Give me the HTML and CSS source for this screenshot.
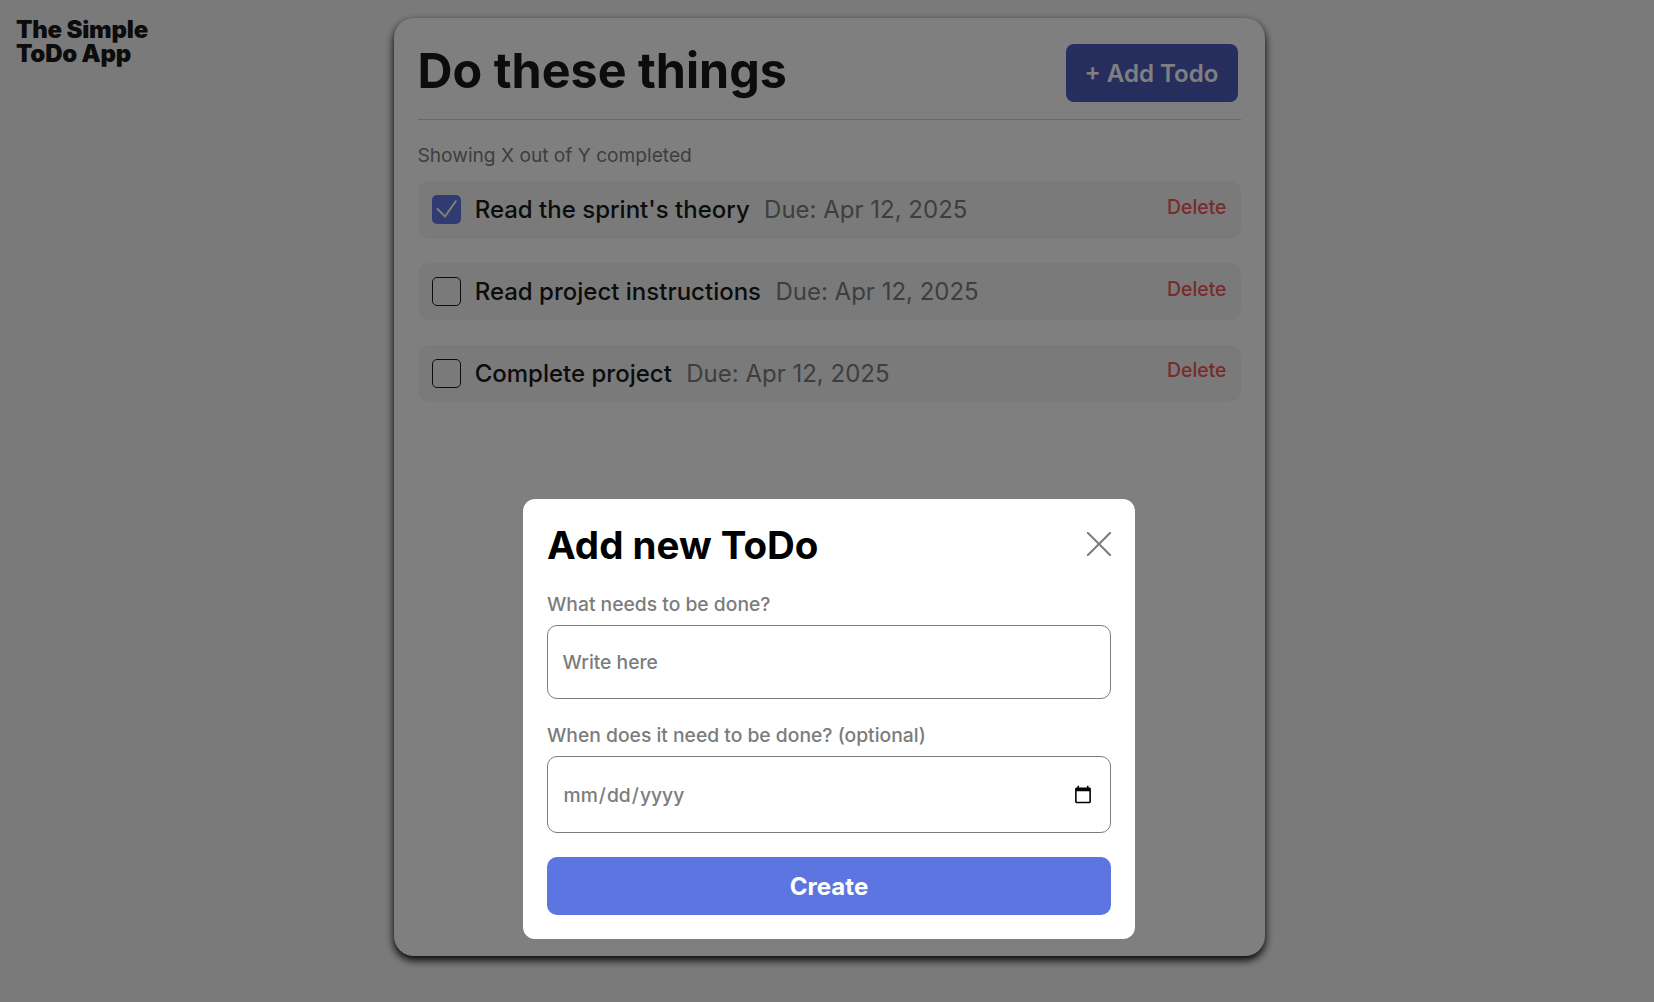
FILE: index.html
```html
<!DOCTYPE html>
<html lang="en">
<head>
<meta charset="utf-8">
<title>The Simple ToDo App</title>
<link rel="stylesheet" href="styles.css">
</head>
<body>
<div class="page">
  <p class="logo">The Simple<br>ToDo App</p>
  <main class="content">
    <header class="header">
      <h1 class="header__title">Do these things</h1>
      <button class="button button_action_add" type="button">+ Add Todo</button>
    </header>
    <p class="counter">Showing X out of Y completed</p>
    <ul class="todos">
      <li class="todo">
        <span class="todo__box todo__box_checked"><svg viewBox="0 0 29 29" class="todo__check"><path d="M5 13.5 13 21.5 24.300 5.500"/></svg></span>
        <span class="todo__name">Read the sprint's theory</span>
        <span class="todo__date">Due: Apr 12, 2025</span>
        <button class="todo__delete" type="button">Delete</button>
      </li>
      <li class="todo">
        <span class="todo__box"></span>
        <span class="todo__name">Read project instructions</span>
        <span class="todo__date">Due: Apr 12, 2025</span>
        <button class="todo__delete" type="button">Delete</button>
      </li>
      <li class="todo">
        <span class="todo__box"></span>
        <span class="todo__name">Complete project</span>
        <span class="todo__date">Due: Apr 12, 2025</span>
        <button class="todo__delete" type="button">Delete</button>
      </li>
    </ul>
  </main>
</div>
<div class="popup">
  <form class="popup__content">
    <div class="popup__header">
      <h2 class="popup__title">Add new ToDo</h2>
      <button class="popup__close" type="button" aria-label="Close"><svg viewBox="0 0 24 24" class="popup__close-icon"><path d="M0 0 24 24M24 0 0 24"/></svg></button>
    </div>
    <label class="popup__label" for="name">What needs to be done?</label>
    <input class="popup__input" id="name" type="text" placeholder="Write here">
    <label class="popup__label" for="date">When does it need to be done? (optional)</label>
    <input class="popup__input popup__input_type_date" id="date" type="date">
    <button class="button button_action_create" type="button">Create</button>
  </form>
</div>
</body>
</html>
```
FILE: styles.css
```css
* {
  box-sizing: border-box;
}

body {
  margin: 0;
  background: #f5f5f5;
  color: #181818;
  font-family: Inter, "Liberation Sans", sans-serif;
  overflow: hidden;
}

h1, h2, p, ul {
  margin: 0;
  padding: 0;
}

button, input {
  font-family: inherit;
}

.page {
  display: flex;
  height: 100vh;
  padding: 18px 0 46px 16px;
}

.logo {
  width: 377.500px;
  font-size: 24px;
  font-weight: 900;
  line-height: 24px;
  letter-spacing: -0.23px;
}

.content {
  width: 871px;
  padding: 26px 24px;
  background: #fff;
  border-radius: 20px;
  box-shadow: 0 4px 8px #000;
}

.header {
  display: flex;
  justify-content: space-between;
  height: 75.500px;
  padding-right: 3px;
  border-bottom: 1px solid #d3d3d3;
}

.header__title {
  font-size: 48.450px;
  font-weight: 700;
  line-height: 53px;
}

.button {
  height: 58px;
  border: none;
  color: #fff;
  font-size: 24.100px;
  font-weight: 700;
}

.button_action_add {
  width: 172px;
  padding: 0;
  border-radius: 8px;
  background: #4a5dba;
  font-weight: 600;
}

.counter {
  margin: 23.500px 0 14px;
  color: #7c7c7c;
  font-size: 19.150px;
  line-height: 24px;
}

.todos {
  display: grid;
  gap: 24.100px;
  list-style: none;
}

.todo {
  display: flex;
  align-items: center;
  height: 57.700px;
  padding: 0 14px;
  border-radius: 10px;
  background: #f5f5f5;
  font-size: 24px;
}

.todo__box {
  width: 29px;
  height: 29px;
  margin-right: 14.200px;
  border: 1px solid #181818;
  border-radius: 5px;
}

.todo__box_checked {
  border: none;
  background: #6076e3;
}

.todo__check {
  display: block;
  fill: none;
  stroke: #fff;
  stroke-width: 2;
}

.todo__name,
.todo__date {
  margin-bottom: 0.200px;
}

.todo__name {
  margin-right: 14.400px;
  font-weight: 500;
}

.todo__date {
  color: #7c7c7c;
}

.todo__delete {
  margin: 0 0 6px auto;
  padding: 0;
  border: none;
  background: none;
  color: #f25656;
  font-size: 19.400px;
  font-weight: 500;
}

.popup {
  position: fixed;
  inset: 0;
  display: flex;
  align-items: flex-end;
  padding: 0 0 63px 523px;
  background: rgba(0, 0, 0, 0.5);
}

.popup__content {
  display: flex;
  flex-direction: column;
  width: 612px;
  padding: 24px;
  border-radius: 12px;
  background: #fff;
}

.popup__header {
  display: flex;
  justify-content: space-between;
  align-items: center;
  height: 45px;
  margin-bottom: 24px;
}

.popup__title {
  color: #000;
  font-size: 38.500px;
  font-weight: 700;
}

.popup__close {
  width: 24px;
  height: 24px;
  margin-bottom: 3px;
  padding: 0;
  border: none;
  background: none;
}

.popup__close-icon {
  display: block;
  fill: none;
  stroke: #7c7c7c;
  stroke-width: 2;
}

.popup__label {
  margin-bottom: 9px;
  color: #7c7c7c;
  font-size: 19.300px;
  font-weight: 500;
  line-height: 24px;
}

.popup__input {
  height: 74.500px;
  margin: 0 0 24px;
  padding: 0 14.500px;
  border: 1px solid #7c7c7c;
  border-radius: 10px;
  background: #fff;
  color: #7c7c7c;
  font-size: 19.300px;
  font-weight: 500;
}

.popup__input::placeholder {
  color: #7c7c7c;
}

.popup__input_type_date {
  height: 77px;
  padding-right: 15.500px;
}

.button_action_create {
  border-radius: 10px;
  background: #5c75e0;
}
```
